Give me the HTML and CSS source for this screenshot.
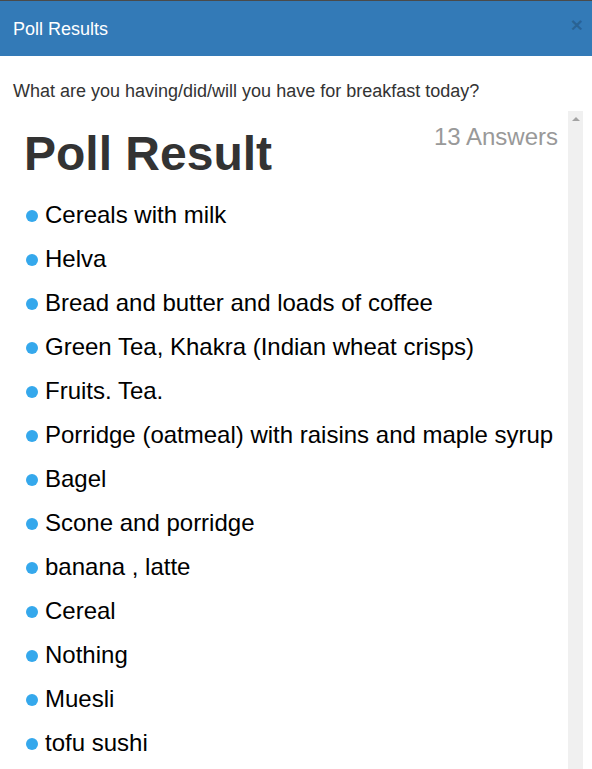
FILE: index.html
```html
<!DOCTYPE html>
<html>
<head>
<meta charset="utf-8">
<link rel="stylesheet" href="styles.css">
</head>
<body>
<div class="modal">
  <div class="modal-header">
    <h4 class="modal-title">Poll Results</h4>
    <span class="close">&times;</span>
  </div>
  <div class="modal-body">
    <p class="question">What are you having/did/will you have for breakfast today?</p>
    <div class="results">
      <div class="results-inner">
        <div class="results-head">
          <h1 class="results-title">Poll Result</h1>
          <span class="answers">13 Answers</span>
        </div>
        <ul class="answer-list">
          <li><span class="dot"></span>Cereals with milk</li>
          <li><span class="dot"></span>Helva</li>
          <li><span class="dot"></span>Bread and butter and loads of coffee</li>
          <li><span class="dot"></span>Green Tea, Khakra (Indian wheat crisps)</li>
          <li><span class="dot"></span>Fruits. Tea.</li>
          <li><span class="dot"></span>Porridge (oatmeal) with raisins and maple syrup</li>
          <li><span class="dot"></span>Bagel</li>
          <li><span class="dot"></span>Scone and porridge</li>
          <li><span class="dot"></span>banana , latte</li>
          <li><span class="dot"></span>Cereal</li>
          <li><span class="dot"></span>Nothing</li>
          <li><span class="dot"></span>Muesli</li>
          <li><span class="dot"></span>tofu sushi</li>
        </ul>
      </div>
      <div class="scrollbar"><span class="arrow-up"></span></div>
    </div>
  </div>
</div>
</body>
</html>
```

FILE: styles.css
```css
html, body {
  margin: 0;
  padding: 0;
  background: #fff;
  font-family: "Liberation Sans", Arial, sans-serif;
  overflow: hidden;
}
.modal {
  width: 592px;
  height: 769px;
  border-top: 1px solid #4a4a4a;
  box-sizing: border-box;
  overflow: hidden;
}
.modal-header {
  height: 55px;
  background: #337ab7;
  display: flex;
  align-items: center;
  justify-content: space-between;
  padding: 0 9px 0 13px;
  box-sizing: border-box;
}
.modal-title {
  margin: 0;
  color: #fff;
  font-size: 18px;
  font-weight: normal;
  line-height: 20px;
}
.close {
  color: rgba(0, 0, 0, 0.2);
  font-size: 21px;
  font-weight: bold;
  line-height: 1;
  margin-top: -8px;
}
.modal-body {
  padding: 0 9px 0 13px;
}
.question {
  margin: 0;
  padding-top: 25px;
  color: #333;
  font-size: 18px;
  line-height: 20px;
  height: 30px;
  white-space: nowrap;
}
.results {
  display: flex;
  height: 700px;
}
.results-inner {
  flex: 1;
  padding: 0 10px 0 11px;
}
.results-head {
  display: flex;
  justify-content: space-between;
  align-items: flex-start;
}
.results-title {
  margin: 17px 0 0 0;
  font-size: 48px;
  line-height: 52px;
  font-weight: bold;
  color: #333;
}
.answers {
  margin-top: 11px;
  font-size: 24px;
  line-height: 29px;
  color: #999;
}
.answer-list {
  list-style: none;
  margin: 13px 0 0 0;
  padding: 0;
}
.answer-list li {
  font-size: 24px;
  line-height: 44px;
  color: #000;
  white-space: nowrap;
}
.dot {
  display: inline-block;
  width: 12px;
  height: 12px;
  border-radius: 50%;
  background: #35a8ec;
  vertical-align: middle;
  margin: 0 7px 0 2px;
  position: relative;
  top: -1px;
}
.scrollbar {
  width: 15px;
  background: #f0f0f0;
  display: flex;
  justify-content: center;
  padding-top: 6px;
  box-sizing: border-box;
}
.arrow-up {
  width: 0;
  height: 0;
  border-left: 4px solid transparent;
  border-right: 4px solid transparent;
  border-bottom: 4px solid #a3a3a3;
}
```
